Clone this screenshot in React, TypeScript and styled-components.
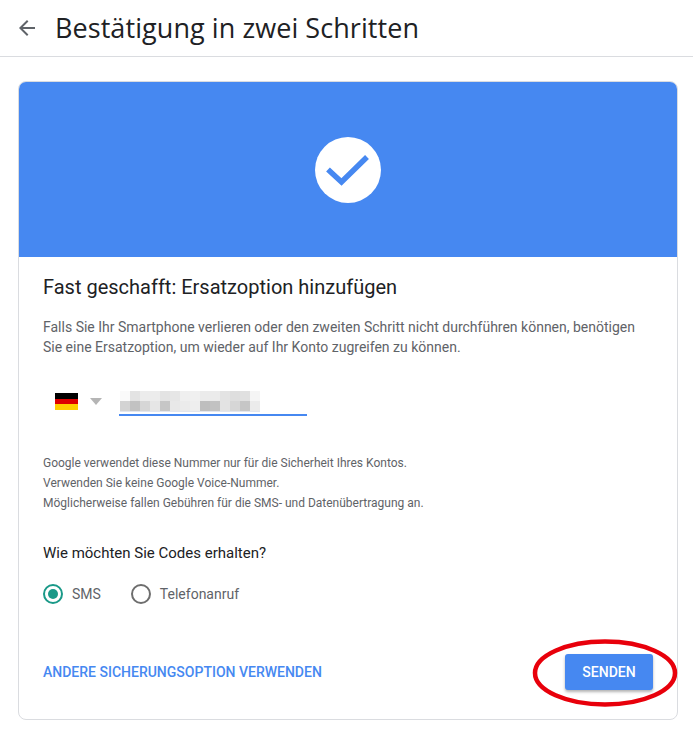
import React from "react";
import styled, { createGlobalStyle } from "styled-components";

const GlobalStyle = createGlobalStyle`
  html, body {
    margin: 0;
    padding: 0;
    background: #fff;
    font-family: Roboto, "Liberation Sans", sans-serif;
  }
`;

const Page = styled.div`
  position: relative;
  width: 693px;
  height: 740px;
  overflow: hidden;
  background: #fff;
`;

const TopBar = styled.header`
  display: flex;
  align-items: center;
  height: 56px;
  padding-left: 15px;
  border-bottom: 1px solid #dadce0;
  box-sizing: content-box;
`;

const BackButton = styled.div`
  display: flex;
  width: 24px;
  height: 24px;
  margin-right: 16px;
  color: #5f6368;
`;

const PageTitle = styled.h1`
  margin: 0;
  font-family: "Open Sans", sans-serif;
  font-size: 27px;
  line-height: 58px;
  font-weight: 400;
  letter-spacing: 0.07px;
  color: #202124;
  white-space: nowrap;
`;

const Card = styled.section`
  margin: 24px 15px 0 18px;
  height: 639px;
  box-sizing: border-box;
  border: 1px solid #dadce0;
  border-radius: 8px;
  overflow: hidden;
`;

const Banner = styled.div`
  display: flex;
  align-items: center;
  justify-content: center;
  height: 175px;
  background: #4688f1;
`;

const CheckCircle = styled.div`
  display: flex;
  align-items: center;
  justify-content: center;
  width: 66px;
  height: 66px;
  border-radius: 50%;
  background: #fff;
`;

const Body = styled.div`
  padding: 18px 24px 0;
`;

const CardTitle = styled.h2`
  margin: 0;
  font-size: 20px;
  line-height: 24px;
  font-weight: 400;
  color: #202124;
`;

const Intro = styled.p`
  margin: 18px 0 0;
  font-size: 14px;
  line-height: 20px;
  color: #5f6368;
  white-space: nowrap;
`;

const PhoneRow = styled.div`
  display: flex;
  align-items: flex-start;
  margin-top: 23px;
  height: 47px;
`;

const Flag = styled.div`
  width: 23px;
  height: 17px;
  margin: 13px 0 0 12px;
  background: linear-gradient(#000 0 33%, #d00 33% 66%, #ffce00 66%);
`;

const Caret = styled.div`
  width: 0;
  height: 0;
  margin: 18px 0 0 12px;
  border-left: 6px solid transparent;
  border-right: 6px solid transparent;
  border-top: 7px solid #b5b5b5;
`;

const PhoneField = styled.div`
  width: 188px;
  height: 25px;
  margin: 11px 0 0 17px;
  padding-left: 1px;
  box-sizing: border-box;
  border-bottom: 2px solid #4688f1;
`;

const Mosaic = styled.div`
  display: grid;
  grid-template-columns: repeat(14, 10px);
  grid-auto-rows: 10px;
  width: 140px;
  border-bottom: 1px solid #e3e6ee;
`;

const Pixel = styled.span<{ $shade: string }>`
  background: ${(p) => p.$shade};
`;

const Notes = styled.div`
  margin-top: 26px;
  font-size: 12px;
  line-height: 20px;
  color: #5f6368;
  white-space: nowrap;
`;

const Question = styled.div`
  margin-top: 30px;
  font-size: 15px;
  line-height: 20px;
  font-weight: 400;
  color: #202124;
`;

const RadioRow = styled.div`
  display: flex;
  align-items: center;
  gap: 30px;
  margin-top: 21px;
`;

const RadioOption = styled.label`
  display: flex;
  align-items: center;
  gap: 9px;
  font-size: 14px;
  line-height: 20px;
  color: #5f6368;
`;

const RadioDot = styled.span<{ $checked?: boolean }>`
  display: flex;
  align-items: center;
  justify-content: center;
  width: 20px;
  height: 20px;
  box-sizing: border-box;
  border-radius: 50%;
  border: 2px solid ${(p) => (p.$checked ? "#1a9988" : "#6e6e6e")};
  &::after {
    content: "";
    display: ${(p) => (p.$checked ? "block" : "none")};
    width: 10px;
    height: 10px;
    border-radius: 50%;
    background: #1a9988;
  }
`;

const Actions = styled.div`
  display: flex;
  align-items: center;
  justify-content: space-between;
  margin-top: 50px;
`;

const LinkButton = styled.a`
  font-size: 14px;
  font-weight: 500;
  line-height: 20px;
  color: #4688f1;
`;

const SendButton = styled.button`
  width: 88px;
  height: 36px;
  border: 0;
  border-radius: 3px;
  background: #4688f1;
  color: #fff;
  font-family: Roboto, sans-serif;
  font-size: 14px;
  font-weight: 500;
  box-shadow: 0 2px 3px rgba(0, 0, 0, 0.3);
`;

const Annotation = styled.svg`
  position: absolute;
  left: 525px;
  top: 631px;
`;

const mosaic = [
  "#fafafa #e3e3e3 #ececec #ececec #e3e3e3 #e6e6e6 #efefef #f0f0f0 #ebebeb #ebebeb #e3e3e3 #dedede #e0e0e0 #f5f5f5",
  "#d3d3d3 #c2c2c2 #d6d6d6 #e6e6e6 #c6c6c6 #e8e8e8 #ebebeb #eeeeee #bebebe #c2c2c2 #e3e3e3 #d6d6d6 #c6c6c6 #ebebeb",
].flatMap((row) => row.split(" "));

export default function App() {
  return (
    <Page>
      <GlobalStyle />
      <TopBar>
        <BackButton>
          <svg width="24" height="24" viewBox="0 0 24 24" fill="currentColor">
            <path d="M20 11H7.83l5.59-5.59L12 4l-8 8 8 8 1.41-1.41L7.83 13H20v-2z" />
          </svg>
        </BackButton>
        <PageTitle>Bestätigung in zwei Schritten</PageTitle>
      </TopBar>
      <Card>
        <Banner>
          <CheckCircle>
            <svg width="46" height="36" viewBox="0 0 46 36" fill="none">
              <path d="M3 17.5 L16.5 30 L42 5" stroke="#4688f1" strokeWidth="5.5" />
            </svg>
          </CheckCircle>
        </Banner>
        <Body>
          <CardTitle>Fast geschafft: Ersatzoption hinzufügen</CardTitle>
          <Intro>
            Falls Sie Ihr Smartphone verlieren oder den zweiten Schritt nicht durchführen können, benötigen
            <br />
            Sie eine Ersatzoption, um wieder auf Ihr Konto zugreifen zu können.
          </Intro>
          <PhoneRow>
            <Flag />
            <Caret />
            <PhoneField>
              <Mosaic>
                {mosaic.map((shade, i) => (
                  <Pixel key={i} $shade={shade} />
                ))}
              </Mosaic>
            </PhoneField>
          </PhoneRow>
          <Notes>
            Google verwendet diese Nummer nur für die Sicherheit Ihres Kontos.
            <br />
            Verwenden Sie keine Google Voice-Nummer.
            <br />
            Möglicherweise fallen Gebühren für die SMS- und Datenübertragung an.
          </Notes>
          <Question>Wie möchten Sie Codes erhalten?</Question>
          <RadioRow>
            <RadioOption>
              <RadioDot $checked />
              SMS
            </RadioOption>
            <RadioOption>
              <RadioDot />
              Telefonanruf
            </RadioOption>
          </RadioRow>
          <Actions>
            <LinkButton>ANDERE SICHERUNGSOPTION VERWENDEN</LinkButton>
            <SendButton>SENDEN</SendButton>
          </Actions>
        </Body>
      </Card>
      <Annotation width="160" height="84" viewBox="0 0 160 84" fill="none">
        <ellipse cx="80" cy="42" rx="70" ry="31.5" stroke="#e8000b" strokeWidth="4.5" />
      </Annotation>
    </Page>
  );
}
